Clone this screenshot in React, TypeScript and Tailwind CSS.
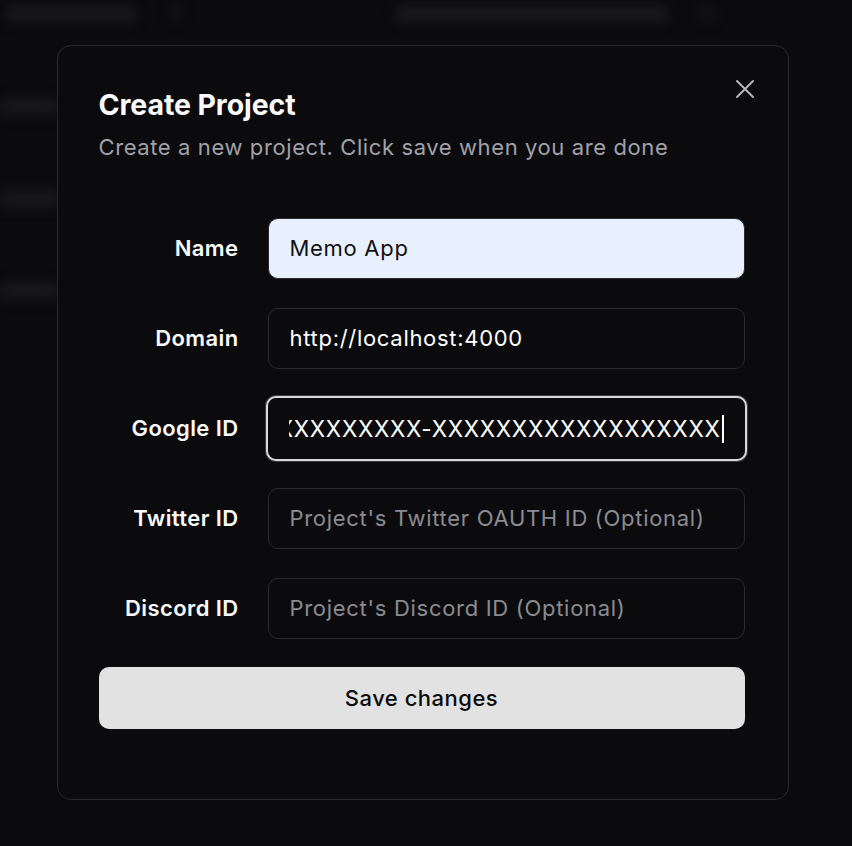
import React from 'react';

const fields = [
  { label: 'Name', value: 'Memo App', kind: 'autofill' },
  { label: 'Domain', value: 'http://localhost:4000', kind: 'filled' },
  { label: 'Google ID', value: 'XXXXXXXXXXXX-XXXXXXXXXXXXXXXXXX', kind: 'focused' },
  { label: 'Twitter ID', value: "Project's Twitter OAUTH ID (Optional)", kind: 'placeholder' },
  { label: 'Discord ID', value: "Project's Discord ID (Optional)", kind: 'placeholder' },
];

function Field({ value, kind }: { value: string; kind: string }) {
  if (kind === 'focused') {
    return (
      <div className="h-[65px] -my-[2px] -mx-[2px] rounded-[10px] border-2 border-[#d8d8dc] shadow-[0_0_0_1px_#3a3a3f] bg-[#0b0b0d] px-[21px] flex items-center">
        <div className="flex-1 overflow-hidden flex justify-end items-center">
          <span className="whitespace-nowrap text-[22.5px] tracking-[0.7px] text-white">{value}</span>
          <span className="ml-[1px] h-[28px] w-[2px] bg-white shrink-0" />
        </div>
      </div>
    );
  }
  const styles: Record<string, string> = {
    autofill: 'bg-[#e8f0fe] border-[#2a2a2e] text-[#111113]',
    filled: 'bg-[#0b0b0d] border-[#2a2a2e] text-white',
    placeholder: 'bg-[#0b0b0d] border-[#2a2a2e] text-[#8b8b92]',
  };
  return (
    <div className={`h-[61px] rounded-[10px] border px-[21px] flex items-center text-[22px] tracking-[0.7px] whitespace-nowrap overflow-hidden ${styles[kind]}`}>
      {value}
    </div>
  );
}

export default function App() {
  return (
    <div
      className="relative h-[846px] w-full overflow-hidden bg-[#0b0b0d]"
      style={{ fontFamily: 'Inter, "Noto Sans", sans-serif' }}
    >
      {/* blurred page behind the dialog */}
      <div className="absolute inset-0 blur-[6px] flex flex-col">
        <div className="flex items-center px-[6px] py-[6px]">
          <div className="h-[16px] w-[130px] rounded bg-[#19191c]" />
          <div className="ml-[34px] h-[16px] w-[12px] rounded bg-[#141417]" />
          <div className="ml-[214px] h-[16px] w-[272px] rounded bg-[#1a1a1d]" />
          <div className="ml-[32px] h-[16px] w-[14px] rounded bg-[#141417]" />
        </div>
        <div className="mt-[70px] flex flex-col gap-[74px]">
          <div className="h-[18px] w-[60px] rounded bg-[#18181b]" />
          <div className="h-[18px] w-[60px] rounded bg-[#18181b]" />
          <div className="h-[18px] w-[60px] rounded bg-[#18181b]" />
        </div>
      </div>

      <div className="absolute inset-0 flex justify-center pt-[45px]">
        <div className="ml-[-7px] h-[755px] w-[732px] rounded-[14px] border border-[#2a2a2e] bg-[#0b0b0d] pl-[41px] pr-[33px] pt-[33px]">
          <div className="flex justify-between items-start">
            <div className="pt-[9px]">
              <h2 className="text-[28.5px] leading-[34px] font-bold tracking-[-0.1px] text-[#fafafa]">Create Project</h2>
              <p className="mt-[10px] text-[22px] leading-[30px] tracking-[0.6px] text-[#a1a1aa]">
                Create a new project. Click save when you are done
              </p>
            </div>
            <button className="text-[#b4b4b9]">
              <svg width="20" height="20" viewBox="0 0 20 20" fill="none" stroke="currentColor" strokeWidth="2" strokeLinecap="round">
                <path d="M2 2 L18 18 M18 2 L2 18" />
              </svg>
            </button>
          </div>

          <div className="mt-[56px] grid grid-cols-[140px_477px] gap-x-[29px] gap-y-[29px] items-center">
            {fields.map((f) => (
              <React.Fragment key={f.label}>
                <label className="text-right text-[22px] tracking-[0.4px] font-semibold text-[#fafafa] whitespace-nowrap">{f.label}</label>
                <Field value={f.value} kind={f.kind} />
              </React.Fragment>
            ))}
          </div>

          <button className="mt-[28px] h-[62px] w-[646px] rounded-[10px] bg-[#e2e2e2] text-[22px] tracking-[0.5px] font-medium text-[#0b0b0d]">
            Save changes
          </button>
        </div>
      </div>
    </div>
  );
}
